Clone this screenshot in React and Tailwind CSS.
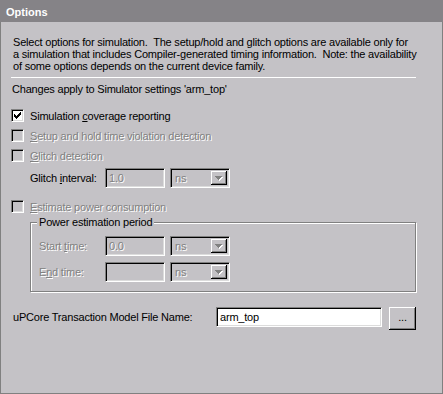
import React from 'react';

// Win95-ish bevels
const sunken =
  'border border-t-[#808080] border-l-[#808080] border-b-white border-r-white shadow-[inset_1px_1px_0_#000,inset_-1px_-1px_0_#dcdcdc]';
const raised =
  'shadow-[inset_-1px_-1px_0_#000,inset_1px_1px_0_#fff,inset_-2px_-2px_0_#808080]';
const dim = 'text-[#818181] [text-shadow:1px_1px_0_#fff]';

const CheckMark = () => (
  <svg width="7" height="7" viewBox="0 0 7 7" shapeRendering="crispEdges">
    <path
      fill="#000"
      d="M0 2h1v3H0z M1 3h1v3H1z M2 4h1v3H2z M3 3h1v3H3z M4 2h1v3H4z M5 1h1v3H5z M6 0h1v3H6z"
    />
  </svg>
);

const Checkbox = ({ checked, disabled, children }) => (
  <div className="flex items-center h-[13px]">
    <div
      className={`w-[13px] h-[13px] flex items-center justify-center ${sunken} ${
        disabled ? 'bg-[#c4c2c6]' : 'bg-white'
      }`}
    >
      {checked && <CheckMark />}
    </div>
    <span className={`ml-[6px] ${disabled ? dim : 'text-black'}`}>{children}</span>
  </div>
);

const TextBox = ({ value, disabled, className = '' }) => (
  <div
    className={`h-[20px] flex items-center pl-[3px] ${sunken} ${
      disabled ? `bg-[#c4c2c6] ${dim}` : 'bg-white text-black'
    } ${className}`}
  >
    {value}
  </div>
);

const Combo = () => (
  <div className={`w-[60px] h-[20px] flex items-center bg-[#c4c2c6] p-[2px] ${sunken}`}>
    <span className={`flex-1 pl-[2px] ${dim}`}>ns</span>
    <div className={`w-[16px] h-full flex items-center justify-center bg-[#c4c2c6] ${raised}`}>
      <svg width="8" height="5" viewBox="0 0 8 5" shapeRendering="crispEdges">
        <path fill="#fff" d="M1 1h7L4.5 5z" />
        <path fill="#818181" d="M0 0h7L3.5 4z" />
      </svg>
    </div>
  </div>
);

export default function App() {
  return (
    <div
      className="w-[443px] h-[394px] flex flex-col bg-[#c4c2c6] text-[11px] leading-[12px] tracking-[-0.2px] select-none"
      style={{ fontFamily: '"Liberation Sans", Arial, sans-serif' }}
    >
      {/* title bar */}
      <div className="h-[22px] shrink-0 bg-[#858387] flex items-center pl-[6px] pt-[1px]">
        <span className="text-white font-bold tracking-normal">Options</span>
      </div>

      <div className="flex-1 flex flex-col pl-[10px] border-l border-r border-b border-[#808080]">
        <p className="mt-[14px] pl-[2px] w-[405px] text-black whitespace-nowrap">
          Select options for simulation.&nbsp; The setup/hold and glitch options are available only for
          <br />
          a simulation that includes Compiler-generated timing information.&nbsp; Note: the availability
          <br />
          of some options depends on the current device family.
        </p>

        <div className="mt-[5px] w-[405px] h-px bg-white" />

        <div className="mt-[5px] pl-px text-black">Changes apply to Simulator settings 'arm_top'</div>

        <div className="mt-[14px] flex flex-col gap-[7px]">
          <Checkbox checked>
            Simulation <u>c</u>overage reporting
          </Checkbox>
          <Checkbox disabled>
            <u>S</u>etup and hold time violation detection
          </Checkbox>
          <Checkbox disabled>
            <u>G</u>litch detection
          </Checkbox>
        </div>

        <div className="mt-[6px] ml-[19px] flex items-center">
          <span className="w-[75px] text-black">
            Glitch <u>i</u>nterval:
          </span>
          <TextBox value="1.0" disabled className="w-[60px]" />
          <div className="ml-[5px]">
            <Combo />
          </div>
        </div>

        <div className="mt-[12px]">
          <Checkbox disabled>
            <u>E</u>stimate power consumption
          </Checkbox>
        </div>

        {/* group box */}
        <div className="relative mt-[9px] ml-[19px] w-[386px] border border-[#808080] shadow-[inset_1px_1px_0_#fff,1px_1px_0_#fff] pt-[13px] pb-[9px] pl-[8px] flex flex-col gap-[6px]">
          <span className="absolute left-[6px] top-[-7px] px-[2px] bg-[#c4c2c6] text-black">
            Power estimation period
          </span>
          <div className="flex items-center">
            <span className={`w-[66px] ${dim}`}>
              Start <u>t</u>ime:
            </span>
            <TextBox value="0.0" disabled className="w-[60px]" />
            <div className="ml-[5px]">
              <Combo />
            </div>
          </div>
          <div className="flex items-center">
            <span className={`w-[66px] ${dim}`}>
              E<u>n</u>d time:
            </span>
            <TextBox value="" disabled className="w-[60px]" />
            <div className="ml-[5px]">
              <Combo />
            </div>
          </div>
        </div>

        <div className="mt-[15px] flex items-start">
          <span className="w-[205px] pl-[2px] h-[20px] flex items-center text-black">
            uPCore Transaction Model File Name:
          </span>
          <TextBox value="arm_top" className="w-[166px]" />
          <button
            className={`ml-[7px] w-[27px] h-[23px] bg-[#c4c2c6] text-black flex items-center justify-center pb-[3px] ${raised}`}
          >
            ...
          </button>
        </div>
      </div>
    </div>
  );
}
